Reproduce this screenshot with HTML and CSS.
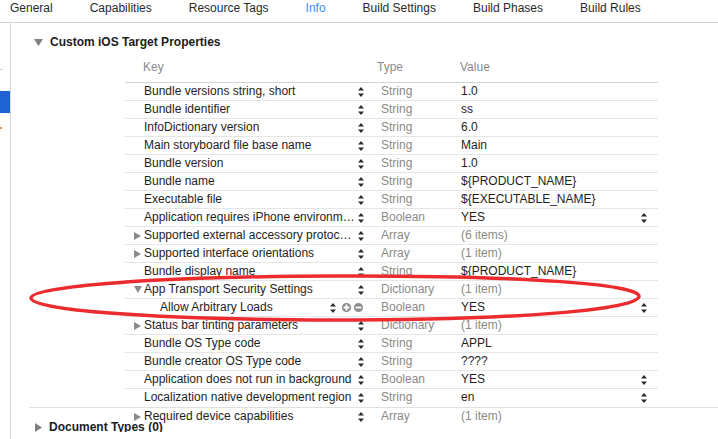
FILE: index.html
```html
<!DOCTYPE html>
<html>
<head>
<meta charset="utf-8">
<link rel="stylesheet" href="styles.css">
</head>
<body>
<div class="tabs">
  <span class="tab">General</span>
  <span class="tab">Capabilities</span>
  <span class="tab">Resource Tags</span>
  <span class="tab active">Info</span>
  <span class="tab">Build Settings</span>
  <span class="tab">Build Phases</span>
  <span class="tab">Build Rules</span>
</div>
<div class="main">
  <div class="sidebar">
    <div class="sb-line"></div>
    <div class="sb-sel"></div>
    <div class="sb-dot"></div>
  </div>
  <div class="content">
    <div class="section-head">
      <svg class="sec-tri" width="9" height="7" viewBox="0 0 9 7"><path d="M0 0H9L4.5 7Z"/></svg>
      <span>Custom iOS Target Properties</span>
    </div>
    <div class="table">
      <div class="thead">
        <div class="h h-key">Key</div>
        <div class="h h-type">Type</div>
        <div class="h h-val">Value</div>
      </div>

      <div class="row"><div class="c-key"><span class="disc"></span><span class="k">Bundle versions string, short</span><svg class="step" viewBox="0 0 6 12"><path d="M0 4.5L3 1L6 4.5Z M0 7.5H6L3 11Z"/></svg></div><div class="c-type">String</div><div class="c-val">1.0</div></div>
      <div class="row"><div class="c-key"><span class="disc"></span><span class="k">Bundle identifier</span><svg class="step" viewBox="0 0 6 12"><path d="M0 4.5L3 1L6 4.5Z M0 7.5H6L3 11Z"/></svg></div><div class="c-type">String</div><div class="c-val">ss</div></div>
      <div class="row"><div class="c-key"><span class="disc"></span><span class="k">InfoDictionary version</span><svg class="step" viewBox="0 0 6 12"><path d="M0 4.5L3 1L6 4.5Z M0 7.5H6L3 11Z"/></svg></div><div class="c-type">String</div><div class="c-val">6.0</div></div>
      <div class="row"><div class="c-key"><span class="disc"></span><span class="k">Main storyboard file base name</span><svg class="step" viewBox="0 0 6 12"><path d="M0 4.5L3 1L6 4.5Z M0 7.5H6L3 11Z"/></svg></div><div class="c-type">String</div><div class="c-val">Main</div></div>
      <div class="row"><div class="c-key"><span class="disc"></span><span class="k">Bundle version</span><svg class="step" viewBox="0 0 6 12"><path d="M0 4.5L3 1L6 4.5Z M0 7.5H6L3 11Z"/></svg></div><div class="c-type">String</div><div class="c-val">1.0</div></div>
      <div class="row"><div class="c-key"><span class="disc"></span><span class="k">Bundle name</span><svg class="step" viewBox="0 0 6 12"><path d="M0 4.5L3 1L6 4.5Z M0 7.5H6L3 11Z"/></svg></div><div class="c-type">String</div><div class="c-val">${PRODUCT_NAME}</div></div>
      <div class="row"><div class="c-key"><span class="disc"></span><span class="k">Executable file</span><svg class="step" viewBox="0 0 6 12"><path d="M0 4.5L3 1L6 4.5Z M0 7.5H6L3 11Z"/></svg></div><div class="c-type">String</div><div class="c-val">${EXECUTABLE_NAME}</div></div>
      <div class="row"><div class="c-key"><span class="disc"></span><span class="k">Application requires iPhone environm…</span><svg class="step" viewBox="0 0 6 12"><path d="M0 4.5L3 1L6 4.5Z M0 7.5H6L3 11Z"/></svg></div><div class="c-type">Boolean</div><div class="c-val"><span>YES</span><svg class="step vstep" viewBox="0 0 6 12"><path d="M0 4.5L3 1L6 4.5Z M0 7.5H6L3 11Z"/></svg></div></div>
      <div class="row"><div class="c-key"><span class="disc"><svg width="7" height="8" viewBox="0 0 7 8"><path d="M0 0L7 4L0 8Z"/></svg></span><span class="k">Supported external accessory protoc…</span><svg class="step" viewBox="0 0 6 12"><path d="M0 4.5L3 1L6 4.5Z M0 7.5H6L3 11Z"/></svg></div><div class="c-type">Array</div><div class="c-val muted">(6 items)</div></div>
      <div class="row"><div class="c-key"><span class="disc"><svg width="7" height="8" viewBox="0 0 7 8"><path d="M0 0L7 4L0 8Z"/></svg></span><span class="k">Supported interface orientations</span><svg class="step" viewBox="0 0 6 12"><path d="M0 4.5L3 1L6 4.5Z M0 7.5H6L3 11Z"/></svg></div><div class="c-type">Array</div><div class="c-val muted">(1 item)</div></div>
      <div class="row"><div class="c-key"><span class="disc"></span><span class="k">Bundle display name</span><svg class="step" viewBox="0 0 6 12"><path d="M0 4.5L3 1L6 4.5Z M0 7.5H6L3 11Z"/></svg></div><div class="c-type">String</div><div class="c-val">${PRODUCT_NAME}</div></div>
      <div class="row"><div class="c-key"><span class="disc"><svg width="8" height="7" viewBox="0 0 8 7"><path d="M0 0H8L4 7Z"/></svg></span><span class="k">App Transport Security Settings</span><svg class="step" viewBox="0 0 6 12"><path d="M0 4.5L3 1L6 4.5Z M0 7.5H6L3 11Z"/></svg></div><div class="c-type">Dictionary</div><div class="c-val muted">(1 item)</div></div>
      <div class="row"><div class="c-key"><span class="disc"></span><span class="k nested">Allow Arbitrary Loads</span><span class="ctrls"><svg class="step" viewBox="0 0 6 12"><path d="M0 4.5L3 1L6 4.5Z M0 7.5H6L3 11Z"/></svg><svg class="pm plus" width="11" height="11" viewBox="0 0 11 11"><circle cx="5.5" cy="5.5" r="5.5"/><path d="M2.6 5.5H8.4M5.5 2.6V8.4"/></svg><svg class="pm" width="11" height="11" viewBox="0 0 11 11"><circle cx="5.5" cy="5.5" r="5.5"/><path d="M2.6 5.5H8.4"/></svg></span></div><div class="c-type">Boolean</div><div class="c-val"><span>YES</span><svg class="step vstep" viewBox="0 0 6 12"><path d="M0 4.5L3 1L6 4.5Z M0 7.5H6L3 11Z"/></svg></div></div>
      <div class="row"><div class="c-key"><span class="disc"><svg width="7" height="8" viewBox="0 0 7 8"><path d="M0 0L7 4L0 8Z"/></svg></span><span class="k">Status bar tinting parameters</span><svg class="step" viewBox="0 0 6 12"><path d="M0 4.5L3 1L6 4.5Z M0 7.5H6L3 11Z"/></svg></div><div class="c-type">Dictionary</div><div class="c-val muted">(1 item)</div></div>
      <div class="row"><div class="c-key"><span class="disc"></span><span class="k">Bundle OS Type code</span><svg class="step" viewBox="0 0 6 12"><path d="M0 4.5L3 1L6 4.5Z M0 7.5H6L3 11Z"/></svg></div><div class="c-type">String</div><div class="c-val">APPL</div></div>
      <div class="row"><div class="c-key"><span class="disc"></span><span class="k">Bundle creator OS Type code</span><svg class="step" viewBox="0 0 6 12"><path d="M0 4.5L3 1L6 4.5Z M0 7.5H6L3 11Z"/></svg></div><div class="c-type">String</div><div class="c-val">????</div></div>
      <div class="row"><div class="c-key"><span class="disc"></span><span class="k">Application does not run in background</span><svg class="step" viewBox="0 0 6 12"><path d="M0 4.5L3 1L6 4.5Z M0 7.5H6L3 11Z"/></svg></div><div class="c-type">Boolean</div><div class="c-val"><span>YES</span><svg class="step vstep" viewBox="0 0 6 12"><path d="M0 4.5L3 1L6 4.5Z M0 7.5H6L3 11Z"/></svg></div></div>
      <div class="row last"><div class="c-key"><span class="disc"></span><span class="k">Localization native development region</span><svg class="step" viewBox="0 0 6 12"><path d="M0 4.5L3 1L6 4.5Z M0 7.5H6L3 11Z"/></svg></div><div class="c-type">String</div><div class="c-val"><span>en</span><svg class="step vstep" viewBox="0 0 6 12"><path d="M0 4.5L3 1L6 4.5Z M0 7.5H6L3 11Z"/></svg></div></div>
      <div class="divider"></div>
      <div class="row last"><div class="c-key"><span class="disc"><svg width="7" height="8" viewBox="0 0 7 8"><path d="M0 0L7 4L0 8Z"/></svg></span><span class="k">Required device capabilities</span><svg class="step" viewBox="0 0 6 12"><path d="M0 4.5L3 1L6 4.5Z M0 7.5H6L3 11Z"/></svg></div><div class="c-type">Array</div><div class="c-val muted">(1 item)</div></div>
    </div>
    <div class="doc-types">
      <svg class="sec-tri" width="7" height="9" viewBox="0 0 7 9"><path d="M0 0L7 4.5L0 9Z"/></svg>
      <span>Document Types (0)</span>
    </div>
  </div>
</div>
<svg class="mark" width="718" height="439" viewBox="0 0 718 439">
  <path d="M336 276C520 275.5 641 284 639 296.5C637 309.5 520 320 330 320C150 319.5 31 310 31 298C31 286 160 276.5 336 276Z"/>
</svg>
</body>
</html>
```

FILE: styles.css
```css
* { box-sizing: border-box; }
body {
  margin: 0;
  width: 718px;
  height: 439px;
  overflow: hidden;
  position: relative;
  background: #fff;
  color: #222;
  font-family: "Liberation Sans", Arial, sans-serif;
  font-size: 12px;
}
.tabs {
  display: flex;
  align-items: flex-start;
  gap: 37px;
  height: 23px;
  padding-left: 10px;
  border-bottom: 1px solid #d4d4d4;
  line-height: 16px;
  color: #2a2a2a;
}
.tab.active { color: #3e8ff0; }

.main { display: flex; height: 416px; }
.sidebar {
  width: 11px;
  flex: none;
  border-right: 1px solid #d6d6d6;
}
.sb-line { width: 3px; height: 1px; margin-top: 46px; background: #d0d0d0; }
.sb-sel { width: 10px; height: 22px; margin-top: 21px; background: #1f63d4; }
.sb-dot { width: 2px; height: 2px; margin-top: 14px; background: #d8932f; }

.content { flex: 1; min-width: 0; }
.section-head {
  display: flex;
  align-items: center;
  height: 18px;
  margin-top: 10px;
  padding-left: 23px;
  font-weight: bold;
  color: #1c1c1c;
}
.sec-tri { fill: #7f7f7f; margin-right: 7px; flex: none; }

.table { margin-left: 114px; width: 533px; }
.thead {
  display: flex;
  align-items: flex-start;
  height: 32px;
  padding-top: 7px;
  line-height: 18px;
  border-bottom: 1px solid #d2d2d2;
  color: #8c8c8c;
}
.h-key { width: 247px; padding-left: 18px; }
.h-type { width: 83px; padding-left: 5px; }
.h-val { padding-left: 5px; }

.row {
  display: flex;
  align-items: center;
  height: 18px;
  line-height: 17px;
  border-bottom: 1px solid #e6e6e6;
}
.row.last { border-bottom: none; padding-bottom: 1px; }
.c-key {
  width: 247px;
  flex: none;
  display: flex;
  align-items: center;
  padding-left: 9px;
  padding-right: 8px;
  white-space: nowrap;
  color: #1e1e1e;
}
.c-type { width: 83px; flex: none; padding-left: 9px; color: #8a8a8a; }
.c-val {
  flex: 1;
  display: flex;
  align-items: center;
  padding-left: 6px;
  padding-right: 11px;
  color: #1e1e1e;
}
.c-val.muted { color: #8a8a8a; }
.disc { width: 10px; flex: none; display: flex; align-items: center; fill: #8a8a8a; }
.k { flex: 1; min-width: 0; overflow: hidden; }
.k.nested { padding-left: 16px; }
.step { width: 6px; height: 12px; flex: none; fill: #2a2a2a; }
.vstep { margin-left: auto; }
.ctrls { display: flex; flex: none; align-items: center; margin-right: 0; }
.ctrls .step { margin-right: 5px; }
.pm { width: 11px; height: 11px; flex: none; fill: #8c8c8c; stroke: #fff; stroke-width: 1.8; margin-left: 1px; }
.pm.plus { margin-left: 0; }

.divider {
  height: 1px;
  margin-left: -96px;
  width: 689px;
  background: #e0e0e0;
}
.doc-types {
  display: flex;
  align-items: flex-start;
  height: 14px;
  margin-top: -8px;
  padding-left: 24px;
  overflow: hidden;
  font-weight: bold;
  line-height: 18px;
  color: #1c1c1c;
}
.doc-types .sec-tri { margin-top: 5px; }

.mark {
  position: absolute;
  left: 0;
  top: 0;
  pointer-events: none;
}
.mark path { fill: none; stroke: #ec2b2f; stroke-width: 3.5; }
```
